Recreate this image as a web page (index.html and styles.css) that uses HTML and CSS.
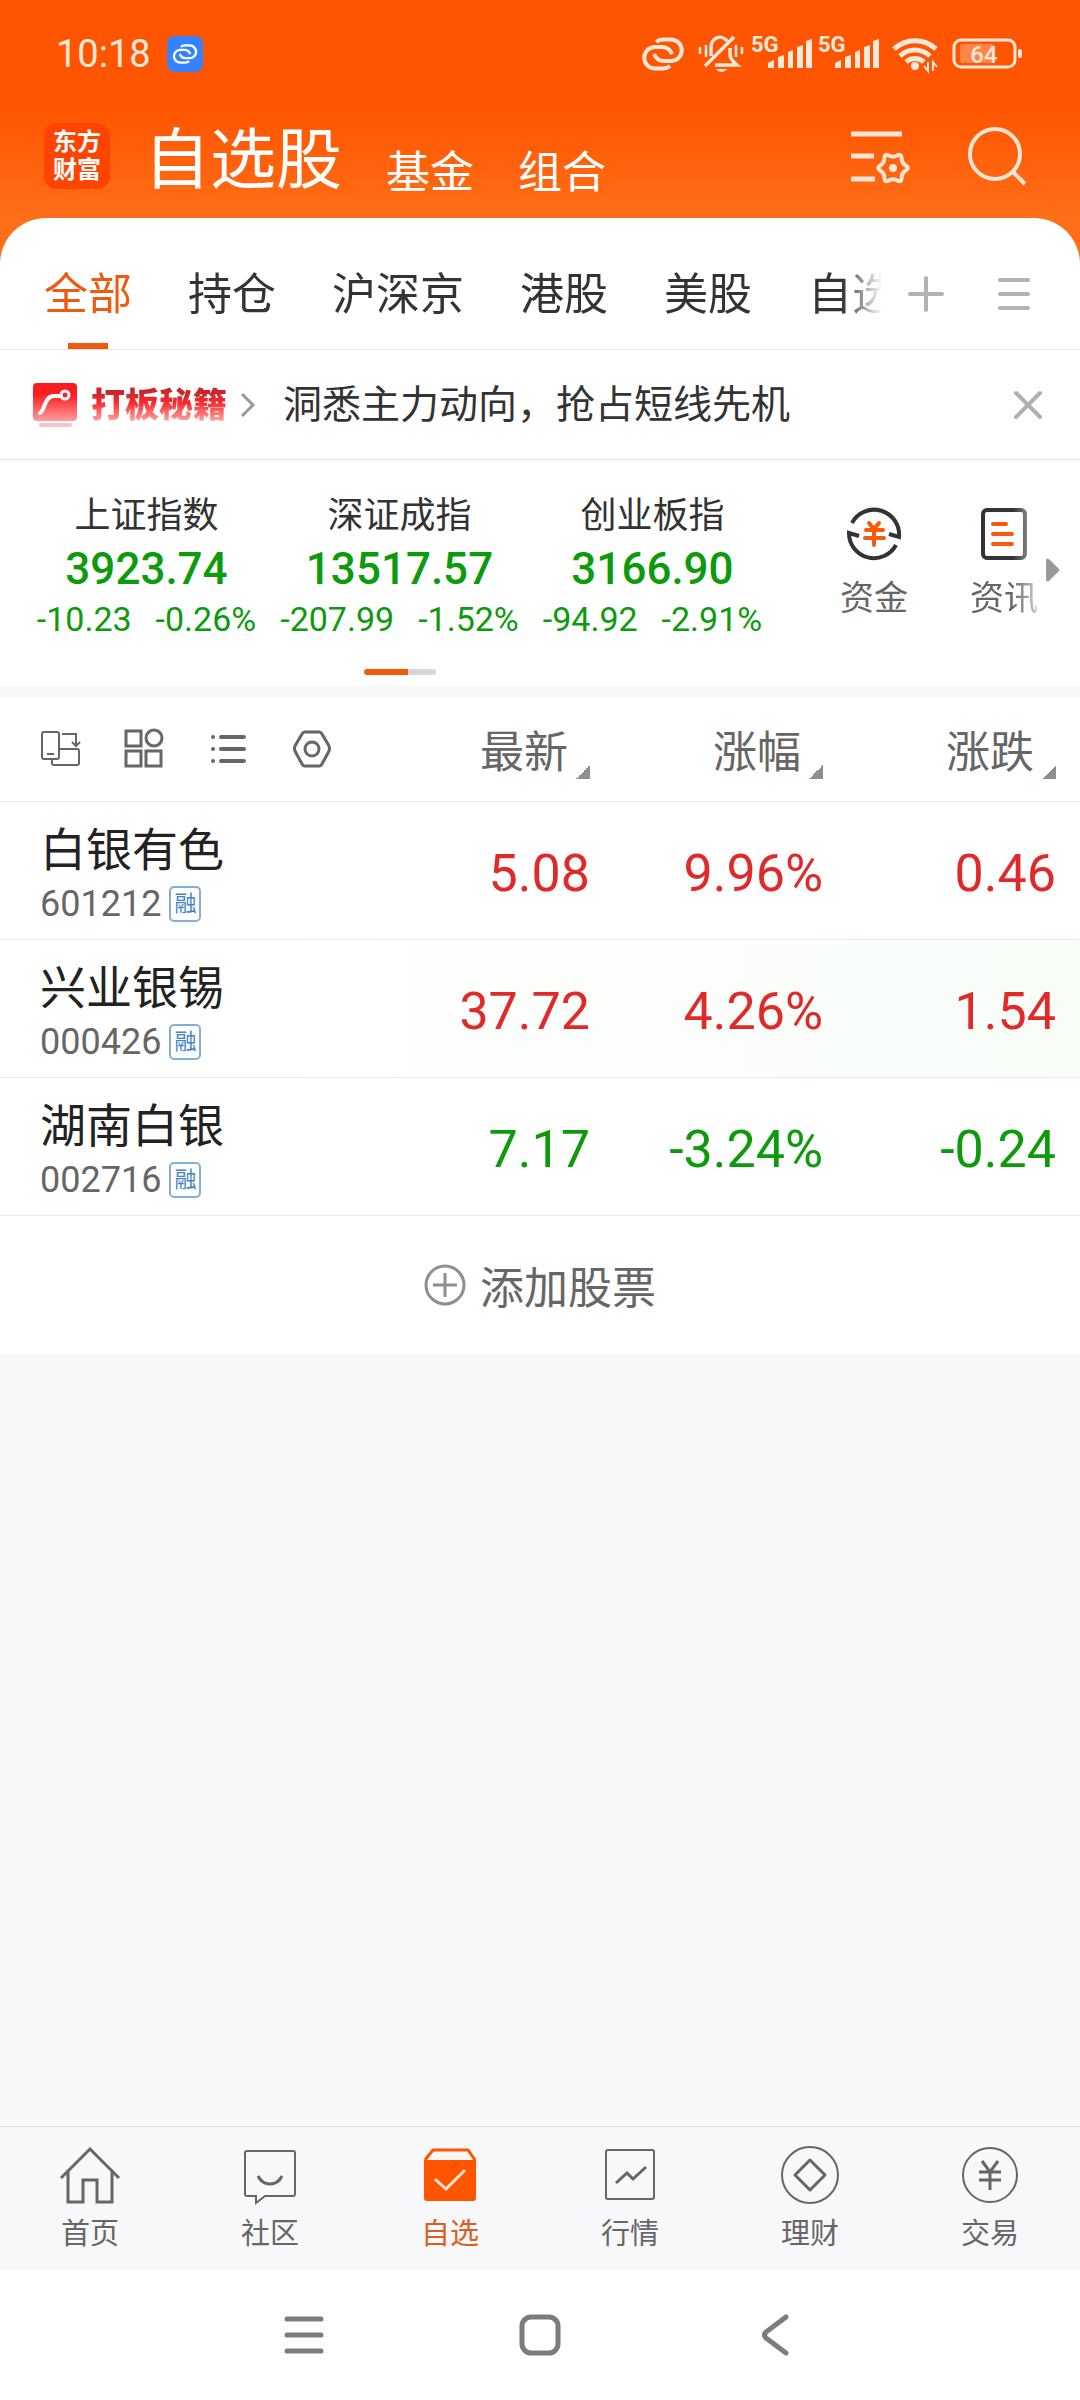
FILE: index.html
```html
<!DOCTYPE html>
<html lang="zh-CN">

<head>
    <meta charset="UTF-8">
    <meta name="viewport" content="width=device-width, initial-scale=1.0">
    <title>自选股</title>
    <link rel="stylesheet" href="styles.css">
</head>

<body>
    <div class="status-bar">
        <span class="clock">10:18</span>
        <span class="link-chip">
            <svg width="26" height="22" viewBox="0 0 44 36" fill="none" stroke="#fff" stroke-width="4">
                <path d="M15 6Q18 3.500 22 3.500H30A10.500 10.500 0 0 1 30 25H23Q16 25 13 18" />
                <path d="M29 30Q26 32.500 22 32.500H14A10.500 10.500 0 0 1 14 11H21Q28 11 31 18" />
            </svg>
        </span>
        <div class="status-icons">
            <svg width="44" height="38" viewBox="0 -1 44 38" fill="none" stroke="#ffe8d9" stroke-width="4">
                <path d="M15 6Q18 3.500 22 3.500H30A10.500 10.500 0 0 1 30 25H23Q16 25 13 18" />
                <path d="M29 30Q26 32.500 22 32.500H14A10.500 10.500 0 0 1 14 11H21Q28 11 31 18" />
            </svg>
            <svg width="54" height="38" viewBox="0 0 54 38" fill="none" stroke="#ffe8d9" stroke-width="3.500">
                <path d="M20 21V13A9 10 0 0 1 36 6M14 31L43 2M39 13V20Q39 24 46 30H24" />
                <path d="M25 34H36Q34 37 30 37Q27 37 25 34Z" fill="#ffe8d9" stroke="none" />
                <path d="M9 12V19M15 10V22M45 10V22M51 12V19" stroke-width="2.500" />
            </svg>
            <svg width="61" height="38" viewBox="0 0 61 38" fill="#ffe8d9">
                <text class="net-label" x="0" y="17">5G</text>
                <path d="M17 28L23 25V33H17ZM27 22L33 20V33H27ZM37 17L42 15V33H37ZM46 12L52 10V33H46ZM55 6L61 4V33H55Z" />
            </svg>
            <svg width="61" height="38" viewBox="0 0 61 38" fill="#ffe8d9">
                <text class="net-label" x="0" y="17">5G</text>
                <path d="M17 28L23 25V33H17ZM27 22L33 20V33H27ZM37 17L42 15V33H37ZM46 12L52 10V33H46ZM55 6L61 4V33H55Z" />
            </svg>
            <svg width="56" height="38" viewBox="0 0 56 38" fill="none" stroke="#ffe8d9" stroke-width="5">
                <path d="M9 14A31 31 0 0 1 51 14M15 21A22 22 0 0 1 45 21M21 27A13 13 0 0 1 39 27" />
                <circle cx="30" cy="31" r="4" fill="#ffe8d9" stroke="none" />
                <path d="M43 27V36L39 31M48 36V27L52 32" stroke-width="2" />
            </svg>
            <svg width="75" height="38" viewBox="0 0 75 38" fill="none">
                <rect x="7" y="5" width="61" height="27" rx="7" stroke="#ffe8d9" stroke-width="3" />
                <rect x="13" y="9" width="34" height="19" rx="3" fill="#ff8547" />
                <rect x="71" y="14" width="4" height="9" rx="2" fill="#ffe8d9" />
                <text class="battery-label" x="37" y="28" text-anchor="middle" fill="#ffe8d9">64</text>
            </svg>
        </div>
    </div>

    <header class="header">
        <div class="logo">东方<br>财富</div>
        <nav class="sections">
            <a href="#" class="section current">自选股</a>
            <a href="#" class="section">基金</a>
            <a href="#" class="section">组合</a>
        </nav>
        <button class="icon-button" aria-label="设置">
            <svg width="60" height="60" viewBox="0 0 60 60" fill="none" stroke="#ffe6d4" stroke-width="4">
                <path d="M1 8H52M1 30H24M1 53H25" stroke-width="5" />
                <path transform="translate(43 42)" d="M12.800 2.500Q8.700 5 8.600 9.900Q8.500 14.700 4.200 12.400Q0 10 -4.200 12.400Q-8.500 14.700 -8.600 9.900Q-8.700 5 -12.800 2.500Q-17 0 -12.800 -2.500Q-8.700 -5 -8.600 -9.900Q-8.500 -14.700 -4.200 -12.400Q0 -10 4.200 -12.400Q8.500 -14.700 8.600 -9.900Q8.700 -5 12.800 -2.500Q17 0 12.800 2.500Z" />
                <circle cx="43" cy="42" r="4" fill="#ffe6d4" stroke="none" />
            </svg>
        </button>
        <button class="icon-button" aria-label="搜索">
            <svg width="60" height="60" viewBox="0 0 60 60" fill="none" stroke="#ffe6d4" stroke-width="4">
                <circle cx="27" cy="28" r="25" />
                <path d="M44 45L57 58" />
            </svg>
        </button>
    </header>

    <main class="sheet">
        <div class="tabs">
            <nav class="tab-list">
                <a href="#" class="tab active">全部</a>
                <a href="#" class="tab">持仓</a>
                <a href="#" class="tab">沪深京</a>
                <a href="#" class="tab">港股</a>
                <a href="#" class="tab">美股</a>
                <a href="#" class="tab">自选</a>
            </nav>
            <button class="icon-button" aria-label="添加分组">
                <svg width="40" height="40" viewBox="0 0 40 40" stroke="#b3b3b3" stroke-width="4" stroke-linecap="round">
                    <path d="M4 20H36M20 4V36" />
                </svg>
            </button>
            <button class="icon-button" aria-label="分组管理">
                <svg width="40" height="40" viewBox="0 0 40 40" stroke="#b3b3b3" stroke-width="4" stroke-linecap="round">
                    <path d="M6 6H34M6 20H34M6 34H34" />
                </svg>
            </button>
        </div>

        <div class="promo">
            <svg width="44" height="46" viewBox="0 0 44 46" fill="none">
                <defs>
                    <linearGradient id="promoFill" x1="0" y1="0" x2="0" y2="1">
                        <stop offset="0.300" stop-color="#fb1d21" />
                        <stop offset="1" stop-color="#ff9c9c" />
                    </linearGradient>
                </defs>
                <rect x="0" y="1" width="44" height="38" rx="4" fill="url(#promoFill)" />
                <rect x="6" y="41" width="33" height="4" rx="2" fill="#fbc4c4" />
                <path d="M7 31C12 29 11 15 20 14H28" stroke="#fff" stroke-width="4" stroke-linecap="round" />
                <circle cx="32" cy="13" r="4" stroke="#fff" stroke-width="3" />
            </svg>
            <a href="#" class="promo-title">打板秘籍</a>
            <svg width="16" height="28" viewBox="0 0 16 28" fill="none" stroke="#999" stroke-width="3">
                <path d="M1 3L12 14L1 25" />
            </svg>
            <a href="#" class="promo-text">洞悉主力动向，抢占短线先机</a>
            <button class="icon-button" aria-label="关闭">
                <svg width="32" height="32" viewBox="0 0 32 32" stroke="#b0b0b0" stroke-width="4" stroke-linecap="round">
                    <path d="M4 4L28 28M28 4L4 28" />
                </svg>
            </button>
        </div>

        <section class="market">
            <div class="indices">
                <div class="index">
                    <div class="index-name">上证指数</div>
                    <div class="index-value">3923.74</div>
                    <div class="index-change"><span>-10.23</span><span>-0.26%</span></div>
                </div>
                <div class="index">
                    <div class="index-name">深证成指</div>
                    <div class="index-value">13517.57</div>
                    <div class="index-change"><span>-207.99</span><span>-1.52%</span></div>
                </div>
                <div class="index">
                    <div class="index-name">创业板指</div>
                    <div class="index-value">3166.90</div>
                    <div class="index-change"><span>-94.92</span><span>-2.91%</span></div>
                </div>
                <div class="pager"></div>
            </div>
            <div class="shortcuts">
                <a href="#" class="shortcut">
                    <svg width="56" height="56" viewBox="0 0 56 56" fill="none" stroke="#333" stroke-width="4">
                        <path d="M6 17A25 25 0 0 1 53 31L43 28M50 39A25 25 0 0 1 3 27L13 30" />
                        <path d="M23 17L28 23L33 17M20 24H37M19 32H38M28 24V39" stroke="#f85a0c" stroke-linecap="round" />
                    </svg>
                    资金
                </a>
                <a href="#" class="shortcut news">
                    <svg width="56" height="56" viewBox="0 0 56 56" fill="none" stroke="#333" stroke-width="4">
                        <rect x="7" y="4" width="42" height="48" rx="4" />
                        <path d="M17 18H30M17 28H36M17 38H36" stroke="#f85a0c" stroke-linecap="round" />
                    </svg>
                    资讯
                </a>
                <svg class="more" width="14" height="26" viewBox="0 0 14 26">
                    <path d="M0 3Q1 0 4 3L13 12Q14 13 13 14L4 23Q1 26 0 23Z" fill="#999" />
                </svg>
            </div>
        </section>

        <table class="stocks">
            <thead>
                <tr>
                    <th class="tools-cell">
                        <div class="tools">
                            <button class="icon-button" aria-label="横屏">
                                <svg width="40" height="40" viewBox="0 0 40 40" fill="none" stroke="#666" stroke-width="2">
                                    <rect x="2" y="3" width="17" height="27" rx="2" />
                                    <path d="M7 25H14M22 5H36V16M32 13L36 17L40 13M19 20H37Q39 20 39 22V34Q39 36 37 36H14Q12 36 12 34V30" />
                                </svg>
                            </button>
                            <button class="icon-button" aria-label="宫格">
                                <svg width="40" height="40" viewBox="0 0 40 40" fill="none" stroke="#666" stroke-width="3">
                                    <rect x="2" y="2" width="15" height="15" />
                                    <circle cx="30" cy="9" r="8" />
                                    <rect x="2" y="22" width="15" height="15" />
                                    <rect x="22" y="22" width="15" height="15" />
                                </svg>
                            </button>
                            <button class="icon-button" aria-label="列表">
                                <svg width="40" height="40" viewBox="0 0 40 40" stroke="#666" stroke-width="4" stroke-linecap="round">
                                    <path d="M5 8H5.100M5 20H5.100M5 32H5.100M13 8H36M13 20H36M13 32H36" />
                                </svg>
                            </button>
                            <button class="icon-button" aria-label="列表设置">
                                <svg width="40" height="40" viewBox="0 0 40 40" fill="none" stroke="#666" stroke-width="3">
                                    <path d="M13 3H27Q29 3 30 5L37 17Q38 19.500 37 22L30 35Q29 37 27 37H13Q11 37 10 35L3 22Q2 19.500 3 17L10 5Q11 3 13 3Z" />
                                    <circle cx="20" cy="20" r="7" />
                                </svg>
                            </button>
                        </div>
                    </th>
                    <th><button class="sort">最新</button></th>
                    <th><button class="sort">涨幅</button></th>
                    <th><button class="sort">涨跌</button></th>
                </tr>
            </thead>
            <tbody>
                <tr class="up">
                    <td class="stock">
                        <div class="stock-name">白银有色</div>
                        <div class="stock-code">601212<span class="badge">融</span></div>
                    </td>
                    <td>5.08</td>
                    <td>9.96%</td>
                    <td>0.46</td>
                </tr>
                <tr class="up flash">
                    <td class="stock">
                        <div class="stock-name">兴业银锡</div>
                        <div class="stock-code">000426<span class="badge">融</span></div>
                    </td>
                    <td>37.72</td>
                    <td>4.26%</td>
                    <td>1.54</td>
                </tr>
                <tr class="down">
                    <td class="stock">
                        <div class="stock-name">湖南白银</div>
                        <div class="stock-code">002716<span class="badge">融</span></div>
                    </td>
                    <td>7.17</td>
                    <td>-3.24%</td>
                    <td>-0.24</td>
                </tr>
            </tbody>
        </table>

        <button class="add-stock">
            <svg width="42" height="42" viewBox="0 0 42 42" fill="none" stroke="#8e8e93" stroke-width="3">
                <circle cx="21" cy="21" r="19" />
                <path d="M9 21H33M21 9V33" />
            </svg>
            添加股票
        </button>
    </main>

    <nav class="bottom-nav">
        <a href="#" class="nav-item">
            <svg width="60" height="60" viewBox="0 0 60 60" fill="none" stroke="#666" stroke-width="3">
                <path d="M1 33L30 4L59 33M8 27V57H23V35H37V57H52V27" />
            </svg>
            首页
        </a>
        <a href="#" class="nav-item">
            <svg width="60" height="60" viewBox="0 0 60 60" fill="none" stroke="#666" stroke-width="2">
                <path d="M7 6H53Q55 6 55 8V49Q55 51 53 51H25L16 58V51H7Q5 51 5 49V8Q5 6 7 6Z" />
                <path d="M18 31Q22 39 30 39Q38 39 42 31" stroke-width="3" />
            </svg>
            社区
        </a>
        <a href="#" class="nav-item selected">
            <svg width="60" height="60" viewBox="0 0 60 60" fill="none">
                <path d="M4 15H56V53Q56 56 53 56H7Q4 56 4 53Z" fill="#f50" />
                <path d="M5 15L13 5H48L55 15" stroke="#f50" stroke-width="3" />
                <path d="M15 34L26 44L45 25" stroke="#ffe6d4" stroke-width="3" />
            </svg>
            自选
        </a>
        <a href="#" class="nav-item">
            <svg width="60" height="60" viewBox="0 0 60 60" fill="none" stroke="#666" stroke-width="2">
                <rect x="6" y="5" width="48" height="49" rx="2" />
                <path d="M16 38L27 28L33 34L46 22" stroke-width="3" />
            </svg>
            行情
        </a>
        <a href="#" class="nav-item">
            <svg width="60" height="60" viewBox="0 0 60 60" fill="none" stroke="#666" stroke-width="2">
                <circle cx="30" cy="30" r="28" />
                <path d="M30 15L45 30L30 45L15 30Z" stroke-width="3" stroke-linejoin="round" />
            </svg>
            理财
        </a>
        <a href="#" class="nav-item">
            <svg width="60" height="60" viewBox="0 0 60 60" fill="none" stroke="#666" stroke-width="2">
                <circle cx="30" cy="30" r="27" />
                <path d="M22 16L30 27L38 16M19 27H41M19 35H41M30 27V45" stroke-width="3" />
            </svg>
            交易
        </a>
    </nav>

    <div class="system-nav">
        <button class="icon-button" aria-label="最近任务">
            <svg width="44" height="44" viewBox="0 0 44 44" stroke="#7c7c7c" stroke-width="5" stroke-linecap="round">
                <path d="M5 6H39M5 22H39M5 38H39" />
            </svg>
        </button>
        <button class="icon-button" aria-label="主屏幕">
            <svg width="44" height="44" viewBox="0 0 44 44" fill="none" stroke="#7c7c7c" stroke-width="5">
                <rect x="4" y="4" width="36" height="36" rx="9" />
            </svg>
        </button>
        <button class="icon-button" aria-label="返回">
            <svg width="44" height="44" viewBox="0 0 44 44" fill="none" stroke="#7c7c7c" stroke-width="5" stroke-linecap="round" stroke-linejoin="round">
                <path d="M32 4L12 19Q9 22 12 25L32 40" />
            </svg>
        </button>
    </div>
</body>

</html>
```
FILE: styles.css
```css
* {
    box-sizing: border-box;
}

body {
    display: flex;
    flex-direction: column;
    min-height: 100vh;
    margin: 0;
    color: #333;
    font-family: Roboto, "Noto Sans CJK SC", sans-serif;
    background: #f6f8fa linear-gradient(#f50 108px, #ff6e18 218px) no-repeat;
    background-size: 100% 300px;
}

a {
    color: inherit;
    text-decoration: none;
}

button {
    padding: 0;
    border: none;
    background: none;
    color: inherit;
    font: inherit;
}

svg {
    display: block;
    flex-shrink: 0;
    overflow: visible;
}

.status-bar {
    display: flex;
    align-items: center;
    height: 108px;
    padding: 0 58px 0 56px;
    color: #ffe8d9;
}

.clock {
    font-size: 38px;
    line-height: 44px;
}

.link-chip {
    display: flex;
    align-items: center;
    justify-content: center;
    width: 36px;
    height: 36px;
    margin-left: 16px;
    border-radius: 8px;
    background-color: #3482ff;
}

.status-icons {
    display: flex;
    gap: 6px;
    margin-left: auto;
}

.net-label {
    font-size: 22px;
    font-weight: 700;
}

.battery-label {
    font-size: 24px;
    font-weight: 500;
}

.header {
    display: flex;
    align-items: center;
    gap: 58px;
    height: 110px;
    padding: 0 52px 14px 44px;
    color: #fff;
}

.logo {
    width: 66px;
    padding: 5px 0;
    border-radius: 13px;
    background-color: #f40;
    font-size: 24px;
    font-weight: 700;
    line-height: 28px;
    text-align: center;
}

.sections {
    display: flex;
    flex: 1;
    align-items: flex-end;
    gap: 44px;
    margin-left: -24px;
    padding-top: 10px;
}

.section {
    font-size: 44px;
    line-height: 56px;
}

.current {
    font-size: 66px;
    line-height: 80px;
}

.sheet {
    flex: 1;
}

.tabs {
    display: flex;
    align-items: flex-end;
    gap: 48px;
    height: 132px;
    padding: 0 46px 0 44px;
    border-bottom: 1px solid #e5e5e5;
    border-radius: 46px 46px 0 0;
    background-color: #fff;
}

.tabs .icon-button {
    margin-bottom: 35px;
}

.tab-list {
    display: flex;
    flex: 1;
    gap: 56px;
    margin-right: -24px;
    overflow: hidden;
    -webkit-mask-image: linear-gradient(to left, transparent, #000 40px);
    mask-image: linear-gradient(to left, transparent, #000 40px);
}

.tab {
    flex-shrink: 0;
    padding-bottom: 20px;
    font-size: 44px;
    line-height: 68px;
}

.active {
    color: #f05a10;
    background: linear-gradient(#f05a10, #f05a10) no-repeat center bottom / 40px 6px;
}

.promo {
    display: flex;
    align-items: center;
    height: 110px;
    padding: 0 36px 0 33px;
    border-bottom: 1px solid #e5e5e5;
    background-color: #fff;
}

.promo-title {
    margin: 0 14px;
    background: linear-gradient(#c9252b 20%, #fb2a2e 45%, #ffa0a0 85%);
    -webkit-background-clip: text;
    background-clip: text;
    color: transparent;
    font-size: 34px;
    font-weight: 900;
    line-height: 44px;
}

.promo-text {
    flex: 1;
    margin-left: 26px;
    font-size: 39px;
    line-height: 48px;
}

.market {
    display: flex;
    height: 226px;
    background-color: #fff;
}

.indices {
    display: grid;
    flex: 1;
    grid-template-columns: repeat(3, 1fr);
    align-content: start;
    padding: 32px 0 0 20px;
}

.index {
    text-align: center;
}

.index-name {
    font-size: 36px;
    line-height: 48px;
}

.index-value {
    color: #0d9b0d;
    font-size: 44px;
    font-weight: 500;
    line-height: 58px;
}

.index-change {
    display: flex;
    justify-content: center;
    gap: 24px;
    color: #0d9b0d;
    font-size: 34px;
    line-height: 42px;
}

.pager {
    grid-column: 1 / -1;
    justify-self: center;
    width: 72px;
    height: 6px;
    margin-top: 29px;
    border-radius: 3px;
    background: linear-gradient(to right, #f55a0c 44px, #d4d6dc 44px);
}

.shortcuts {
    display: flex;
    align-items: center;
    padding: 0 20px 18px 30px;
}

.shortcut {
    display: flex;
    flex-direction: column;
    align-items: center;
    gap: 12px;
    width: 130px;
    color: #666;
    font-size: 34px;
    line-height: 48px;
}

.news {
    -webkit-mask-image: linear-gradient(to left, transparent 20px, #000 56px);
    mask-image: linear-gradient(to left, transparent 20px, #000 56px);
}

.more {
    margin: 12px 0 0 -23px;
}

.stocks {
    width: 100%;
    border-top: 11px solid #f6f8fa;
    border-spacing: 0;
    table-layout: fixed;
    background-color: #fff;
}

.stocks th,
.stocks td {
    width: 233px;
    height: 138px;
    padding: 6px 0 0;
    border-bottom: 1px solid #ebebeb;
    font-size: 52px;
    font-weight: 400;
    text-align: right;
}

.stocks th {
    height: 105px;
    padding-top: 0;
    color: #666;
}

.stocks th:last-child,
.stocks td:last-child {
    width: 257px;
    padding-right: 24px;
}

.stocks .tools-cell,
.stocks .stock {
    width: auto;
    padding-left: 40px;
    text-align: left;
}

.tools {
    display: flex;
    gap: 44px;
}

.sort {
    display: inline-flex;
    align-items: flex-end;
    gap: 8px;
    vertical-align: middle;
    font-size: 44px;
    line-height: 52px;
}

.sort::after {
    content: "";
    width: 14px;
    height: 14px;
    background: linear-gradient(135deg, transparent 50%, #8e8e93 50%);
}

.up {
    color: #e02a2a;
}

.down {
    color: #0d9b0d;
}

.flash {
    background: linear-gradient(to right, #fff 20%, #f8fdf8);
}

.stock-name {
    color: #222;
    font-size: 46px;
    line-height: 60px;
}

.stock-code {
    display: flex;
    align-items: center;
    gap: 8px;
    color: #666;
    font-size: 36px;
    line-height: 48px;
}

.badge {
    width: 32px;
    border: 2px solid #86afd8;
    border-radius: 5px;
    color: #4583c8;
    font-size: 22px;
    line-height: 32px;
    text-align: center;
}

.add-stock {
    display: flex;
    align-items: center;
    justify-content: center;
    gap: 14px;
    width: 100%;
    height: 138px;
    background-color: #fff;
    color: #666;
    font-size: 44px;
}

.bottom-nav {
    display: flex;
    height: 144px;
    padding-top: 18px;
    border-top: 1px solid #dfdfe2;
    background-color: #f8f8fb;
}

.nav-item {
    display: flex;
    flex: 1;
    flex-direction: column;
    align-items: center;
    gap: 9px;
    color: #666;
    font-size: 29px;
    line-height: 40px;
}

.selected {
    color: #d9601c;
}

.system-nav {
    display: flex;
    align-items: center;
    justify-content: center;
    gap: 192px;
    height: 130px;
    background-color: #fff;
}
```
